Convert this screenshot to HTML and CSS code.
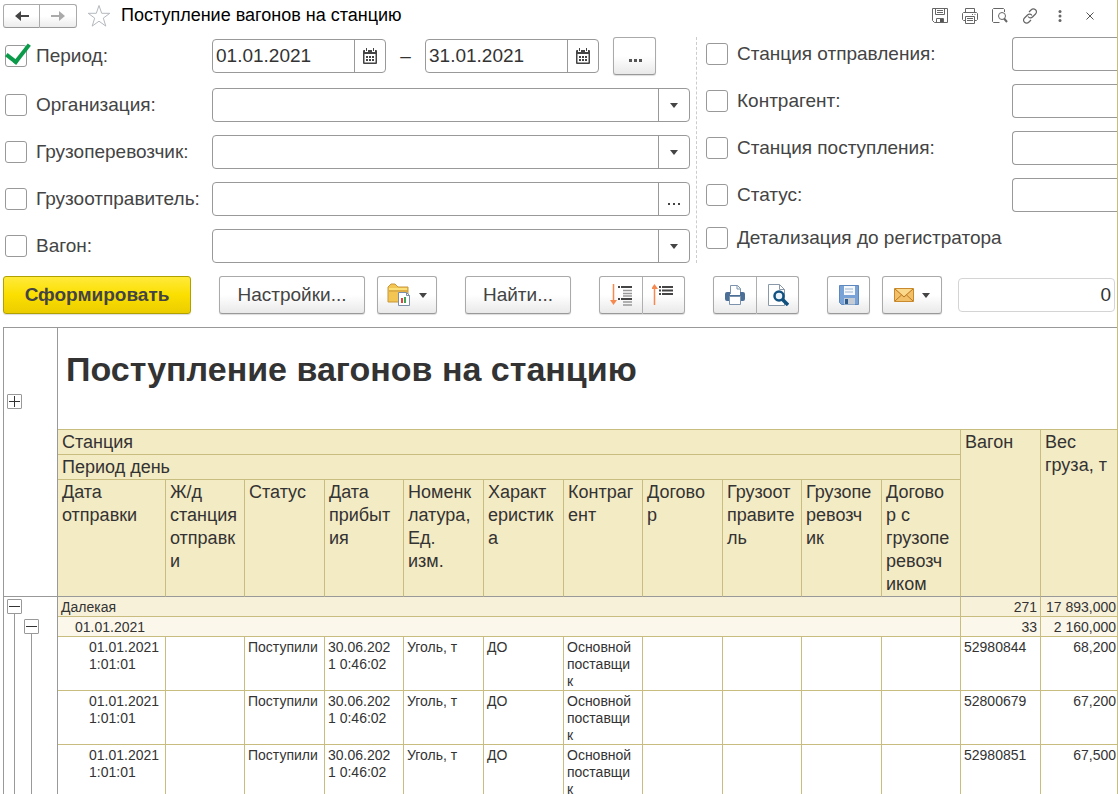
FILE: index.html
```html
<!DOCTYPE html>
<html lang="ru">
<head>
<meta charset="utf-8">
<title>Поступление вагонов на станцию</title>
<link rel="stylesheet" href="styles.css">
</head>
<body>
<svg class="defs" aria-hidden="true">
  <symbol id="calendar" viewBox="0 0 14 16">
    <path d="M1 2h12q1 0 1 1v12q0 1-1 1H1q-1 0-1-1V3q0-1 1-1z" fill="#444"/>
    <path d="M2 0h3v4H2zM9 0h3v4H9z" fill="#fff"/>
    <path d="M3 0h1v3H3zM10 0h1v3h-1z" fill="#444"/>
    <path d="M1.500 6h11v8.500h-11z" fill="#fff"/>
    <path d="M3 8h2v2H3zM6 8h2v2H6zM9 8h2v2H9zM3 11h2v2H3zM6 11h2v2H6zM9 11h2v2H9z" fill="#444"/>
  </symbol>
  <symbol id="caret" viewBox="0 0 8 5"><path d="M0 0h8L4 5z" fill="#444"/></symbol>
</svg>
<main class="app">
  <header class="titlebar">
    <div class="group nav">
      <button class="nav-btn" aria-label="Назад"><svg width="16" height="12" viewBox="0 0 16 12"><path d="M1 6l6-5v4h8v2H7v4z" fill="#444"/></svg></button>
      <button class="nav-btn" aria-label="Вперед"><svg width="16" height="12" viewBox="0 0 16 12"><path d="M15 6L9 1v4H1v2h8v4z" fill="#aaa"/></svg></button>
    </div>
    <button class="plain" aria-label="В избранное"><svg width="24" height="24" viewBox="0 0 24 24"><path d="M12 1.500l2.700 7.800h8.100l-6.500 4.800 2.500 8-6.800-4.900-6.800 4.900 2.500-8L1.200 9.300h8.100z" fill="none" stroke="#b4b8be"/></svg></button>
    <h1 class="title">Поступление вагонов на станцию</h1>
    <div class="tools">
      <button class="plain" aria-label="Сохранить"><svg width="16" height="16" viewBox="0 0 16 16" fill="none" stroke="#666"><path d="M.5.5h15v14H2.500l-2-2zM3.500.5v6h9v-6M5 2.500h6M5 4.500h6M4.500 14.500v-4h7v4"/><path d="M8 11h3v3H8z" fill="#555" stroke="none"/></svg></button>
      <button class="plain" aria-label="Печать"><svg width="16" height="16" viewBox="0 0 16 16" fill="none" stroke="#666"><path d="M3.500 4.500v-4h9v4M3.500 12.500h-2l-1-1v-6l1-1h13l1 1v6l-1 1h-2M3.500 8.500h9v7h-9zM5 10.500h6M5 12.500h6M10 6.500h1M12.500 6.500h1"/></svg></button>
      <button class="plain" aria-label="Просмотр"><svg width="16" height="16" viewBox="0 0 16 16" fill="none" stroke="#666"><path d="M12.500 4V1.500l-1-1H1.500l-1 1v12l1 1h6"/><circle cx="10" cy="8" r="3.500"/><path d="M12 10.500l3 3.500" stroke-width="2"/></svg></button>
      <button class="plain" aria-label="Ссылка"><svg width="16" height="16" viewBox="0 0 16 16" fill="none" stroke="#666" stroke-width="1.200"><path d="M7 4l2-2c3-3 7.500 1 4.500 4L10.500 9C9 10.500 7 10 6 8.500M9 12l-2 2c-3 3-7.500-1-4.500-4L5.500 7C7 5.500 9 6 10 7.500"/></svg></button>
      <button class="plain" aria-label="Еще"><svg width="16" height="12" viewBox="0 0 16 12" fill="#666"><circle cx="8" cy="1.500" r="1.500"/><circle cx="8" cy="6" r="1.500"/><circle cx="8" cy="10.500" r="1.500"/></svg></button>
      <button class="plain" aria-label="Закрыть"><svg width="16" height="8" viewBox="0 0 16 8"><path d="M4.500.5l7 7M11.500.5l-7 7" stroke="#555"/></svg></button>
    </div>
  </header>

  <section class="filters">
    <div class="left">
      <div class="row">
        <label class="check"><input type="checkbox" checked>Период:</label>
        <div class="period">
          <div class="field date"><input type="text" value="01.01.2021" aria-label="Начало периода"><button aria-label="Календарь"><svg width="14" height="16"><use href="#calendar"/></svg></button></div>
          <span class="dash">–</span>
          <div class="field date"><input type="text" value="31.01.2021" aria-label="Конец периода"><button aria-label="Календарь"><svg width="14" height="16"><use href="#calendar"/></svg></button></div>
          <button class="btn more" aria-label="Выбрать период"><svg width="14" height="3" viewBox="0 0 14 3"><path d="M1 0h3v3H1zM6 0h3v3H6zM11 0h3v3h-3z" fill="#555"/></svg></button>
        </div>
      </div>
      <div class="row">
        <label class="check"><input type="checkbox">Организация:</label>
        <div class="field"><input type="text" aria-label="Организация"><button aria-label="Выбрать"><svg width="8" height="5"><use href="#caret"/></svg></button></div>
      </div>
      <div class="row">
        <label class="check"><input type="checkbox">Грузоперевозчик:</label>
        <div class="field"><input type="text" aria-label="Грузоперевозчик"><button aria-label="Выбрать"><svg width="8" height="5"><use href="#caret"/></svg></button></div>
      </div>
      <div class="row">
        <label class="check"><input type="checkbox">Грузоотправитель:</label>
        <div class="field"><input type="text" aria-label="Грузоотправитель"><button class="dots" aria-label="Выбрать"><svg width="12" height="2" viewBox="0 0 12 2"><path d="M0 0h2v2H0zM5 0h2v2H5zM10 0h2v2h-2z" fill="#444"/></svg></button></div>
      </div>
      <div class="row">
        <label class="check"><input type="checkbox">Вагон:</label>
        <div class="field"><input type="text" aria-label="Вагон"><button aria-label="Выбрать"><svg width="8" height="5"><use href="#caret"/></svg></button></div>
      </div>
    </div>
    <div class="right">
      <div class="row"><label class="check"><input type="checkbox">Станция отправления:</label><div class="field cut"><input type="text" aria-label="Станция отправления"></div></div>
      <div class="row"><label class="check"><input type="checkbox">Контрагент:</label><div class="field cut"><input type="text" aria-label="Контрагент"></div></div>
      <div class="row"><label class="check"><input type="checkbox">Станция поступления:</label><div class="field cut"><input type="text" aria-label="Станция поступления"></div></div>
      <div class="row"><label class="check"><input type="checkbox">Статус:</label><div class="field cut"><input type="text" aria-label="Статус"></div></div>
      <div class="row"><label class="check"><input type="checkbox">Детализация до регистратора</label></div>
    </div>
  </section>

  <section class="toolbar">
    <button class="btn primary">Сформировать</button>
    <div class="cluster">
      <button class="btn settings">Настройки...</button>
      <button class="btn drop" aria-label="Варианты отчета">
        <svg width="24" height="24" viewBox="0 0 24 24"><path d="M1 19V4l3-3h4l3 3h10v15z" fill="#f3c653" stroke="#c9973a"/><path d="M2 8h19" stroke="#c9973a"/><path d="M2 5h18v2H2z" fill="#fbe07a"/><path d="M11.500 9.500h8l3 3v10h-11z" fill="#fff" stroke="#7c8fa8"/><path d="M19.500 9.500v3h3" fill="none" stroke="#7c8fa8"/><path d="M14 15h2v5h-2z" fill="#e2433a"/><path d="M17 14h2v6h-2z" fill="#3ba656"/></svg>
        <svg width="8" height="5"><use href="#caret"/></svg>
      </button>
    </div>
    <button class="btn find">Найти...</button>
    <div class="group">
      <button class="btn icon" aria-label="Развернуть"><svg width="24" height="24" viewBox="0 0 24 24"><path d="M4.500 1v18" stroke="#f5894f" stroke-width="1.500"/><path d="M1 17h7l-3.500 5z" fill="#f5894f"/><path d="M9 4h2M12 4h11M9 16h2M12 16h11" stroke="#444" stroke-width="2"/><path d="M14 7.500h9M14 10.500h9M14 13h9M14 19h9M14 22h9" stroke="#999" stroke-width="1.500"/></svg></button>
      <button class="btn icon" aria-label="Свернуть"><svg width="24" height="24" viewBox="0 0 24 24"><path d="M2.500 4v18" stroke="#f5894f" stroke-width="1.500"/><path d="M-1 6h7L2.500 1z" fill="#f5894f"/><path d="M7 4h2M10 4h11M7 7.500h2M10 7.500h11M7 11h2M10 11h11" stroke="#444" stroke-width="2"/></svg></button>
    </div>
    <div class="group">
      <button class="btn icon" aria-label="Печать"><svg width="22" height="22" viewBox="0 0 22 22"><path d="M6.500 10V1.500h7l3 3V10" fill="#fff" stroke="#7c93ad"/><path d="M13 1.500V5h3.500" fill="none" stroke="#7c93ad"/><path d="M3 8h3v3h10V8h3q2 0 2 2v5q0 2-2 2H3q-2 0-2-2v-5q0-2 2-2z" fill="#4c6f97"/><path d="M5.500 12.500h11v8h-11z" fill="#fff" stroke="#7c93ad"/></svg></button>
      <button class="btn icon" aria-label="Предварительный просмотр"><svg width="22" height="22" viewBox="0 0 22 22"><path d="M1.500.5h11l5 5v16h-16z" fill="#fff" stroke="#8a99aa"/><path d="M12.500.5v5h5" fill="none" stroke="#8a99aa"/><circle cx="12" cy="12" r="4.500" fill="#eaf3fa" stroke="#11517f" stroke-width="2.500"/><path d="M15 15l6 6" stroke="#11517f" stroke-width="3.500"/></svg></button>
    </div>
    <div class="cluster">
      <button class="btn icon" aria-label="Сохранить"><svg width="20" height="20" viewBox="0 0 20 20"><path d="M.5.5h19v19h-17l-2-2z" fill="#79a3d6" stroke="#5d88bd"/><path d="M5 1h11v9H5z" fill="#f5f8fc"/><path d="M6 4h8M6 7h8" stroke="#9db6d2"/><path d="M5 13h11v6.500H5z" fill="#c5ccd4"/><path d="M6 14h3v5H6z" fill="#2d5b8e"/></svg></button>
      <button class="btn drop" aria-label="Отправить">
        <svg width="20" height="14" viewBox="0 0 20 14"><path d="M.5.5h19v13H.5z" fill="#f3c06a" stroke="#c98a2e"/><path d="M2 1h16l-8 7z" fill="#fbd98c"/><path d="M1 1l9 8 9-8M1 13l6.500-6M19 13l-6.500-6" fill="none" stroke="#b97a22"/></svg>
        <svg width="8" height="5"><use href="#caret"/></svg>
      </button>
    </div>
    <input class="sum" type="text" value="0" aria-label="Сумма">
  </section>

  <section class="report">
    <table>
      <colgroup><col class="c-tree"><col class="c-first"><col class="c-a"><col class="c-b"><col class="c-a"><col class="c-b"><col class="c-b"><col class="c-a"><col class="c-b"><col class="c-a"><col class="c-b"><col class="c-a"><col class="c-b"><col></colgroup>
      <thead>
        <tr><td class="tree tree-head" rowspan="4"><button class="node" aria-label="Развернуть"><svg width="13" height="13"><path d="M1 6.500h11M6.500 1v11" stroke="#333"/></svg></button></td><td class="caption edge" colspan="13">Поступление вагонов на станцию</td></tr>
        <tr><th colspan="11">Станция</th><th class="tall" rowspan="3">Вагон</th><th class="tall edge" rowspan="3">Вес<br>груза, т</th></tr>
        <tr><th colspan="11">Период день</th></tr>
        <tr class="cols"><th>Дата<br>отправки</th><th>Ж/д<br>станция<br>отправк<br>и</th><th>Статус</th><th>Дата<br>прибыт<br>ия</th><th>Номенк<br>латура,<br>Ед.<br>изм.</th><th>Характ<br>еристик<br>а</th><th>Контраг<br>ент</th><th>Догово<br>р</th><th>Грузоот<br>правите<br>ль</th><th>Грузопе<br>ревозч<br>ик</th><th>Догово<br>р с<br>грузопе<br>ревозч<br>иком</th></tr>
      </thead>
      <tbody>
        <tr class="total"><td class="tree t1"><button class="node" aria-label="Свернуть"><svg width="13" height="13"><path d="M1 6.500h11" stroke="#333"/></svg></button></td><td colspan="11">Далекая</td><td class="num">271</td><td class="num edge">17 893,000</td></tr>
        <tr class="total day"><td class="tree t2"><button class="node" aria-label="Свернуть"><svg width="13" height="13"><path d="M1 6.500h11" stroke="#333"/></svg></button></td><td class="in1" colspan="11">01.01.2021</td><td class="num">33</td><td class="num edge">2 160,000</td></tr>
        <tr class="item"><td class="tree t3"></td><td class="in2">01.01.2021<br>1:01:01</td><td></td><td>Поступили</td><td>30.06.202<br>1 0:46:02</td><td>Уголь, т</td><td>ДО</td><td>Основной<br>поставщи<br>к</td><td></td><td></td><td></td><td></td><td>52980844</td><td class="num edge">68,200</td></tr>
        <tr class="item"><td class="tree t3"></td><td class="in2">01.01.2021<br>1:01:01</td><td></td><td>Поступили</td><td>30.06.202<br>1 0:46:02</td><td>Уголь, т</td><td>ДО</td><td>Основной<br>поставщи<br>к</td><td></td><td></td><td></td><td></td><td>52800679</td><td class="num edge">67,200</td></tr>
        <tr class="item"><td class="tree t3"></td><td class="in2">01.01.2021<br>1:01:01</td><td></td><td>Поступили</td><td>30.06.202<br>1 0:46:02</td><td>Уголь, т</td><td>ДО</td><td>Основной<br>поставщи<br>к</td><td></td><td></td><td></td><td></td><td>52980851</td><td class="num edge">67,500</td></tr>
      </tbody>
    </table>
  </section>
</main>
</body>
</html>
```

FILE: styles.css
```css
* { box-sizing: border-box; }
body {
  margin: 0;
  background: #fff;
  color: #444;
  font-family: "Liberation Sans", Arial, sans-serif;
  font-size: 19px;
}
button, input { font: inherit; color: inherit; }
button { padding: 0; cursor: pointer; }
svg { display: block; }
.defs { display: none; }

.app {
  height: 100vh;
  display: flex;
  flex-direction: column;
  overflow: hidden;
  border-right: 1px solid #c8bd7f;
}

/* Title bar */
.titlebar {
  display: flex;
  align-items: center;
  flex: none;
  height: 32px;
  padding: 0 19px 1px 3px;
  gap: 10px;
}
.group { display: flex; }
.nav-btn {
  width: 37px;
  height: 24px;
  display: grid;
  place-items: center;
  border: 1px solid #aaa;
  background: linear-gradient(#fff 50%, #ececec);
  border-bottom-color: #999;
}
.group > button:first-child { border-radius: 3px 0 0 3px; }
.group > button + button { border-left: 0; border-radius: 0 3px 3px 0; }
.plain { border: 0; background: none; display: grid; place-items: center; }
.title { margin: 0; font-size: 18px; font-weight: 400; color: #000; }
.tools { display: flex; align-items: center; gap: 14px; margin-left: auto; }

/* Filters */
.filters { display: flex; align-items: stretch; }
.left {
  flex: 0 0 696px;
  padding: 5px 6px 13px 5px;
  display: grid;
  gap: 13px;
}
.right {
  flex: 1;
  min-width: 0;
  overflow: hidden;
  padding-left: 9px;
  margin: 5px 0 13px;
  display: grid;
  align-content: start;
  gap: 13px;
  border-left: 1px dashed #ccc;
}
.row { display: grid; grid-template-columns: 207px 1fr; align-items: center; }
.right .row { grid-template-columns: 306px 1fr; }
.right .row:last-child { grid-template-columns: 1fr; padding-top: 2px; }
.check { display: flex; align-items: center; gap: 9px; white-space: nowrap; }
.check input {
  appearance: none;
  flex: none;
  width: 22px;
  height: 22px;
  margin: 0;
  border: 1px solid #999;
  border-radius: 3px;
  background: #fff;
  position: relative;
}
.check input:checked::after {
  content: "";
  position: absolute;
  left: 6px;
  top: -5px;
  width: 10px;
  height: 20px;
  border: solid #0b9a4a;
  border-width: 0 4px 4px 0;
  transform: translate(-1px, -2px) rotate(38deg);
}
.field {
  display: flex;
  height: 34px;
  border: 1px solid #999;
  border-radius: 4px;
  background: #fff;
  overflow: hidden;
}
.field input {
  flex: 1;
  min-width: 0;
  border: 0;
  padding: 0 3px;
  background: none;
  color: #333;
}
.field button {
  width: 31px;
  border: 0;
  border-left: 1px solid #999;
  background: none;
  display: grid;
  place-items: center;
}
.field .dots { padding-top: 10px; }
.cut { border-right: 0; border-radius: 4px 0 0 4px; }
.period { display: flex; align-items: center; height: 38px; }
.date { width: 174px; }
.dash { width: 39px; text-align: center; color: #333; }

/* Toolbar */
.btn {
  height: 38px;
  border: 1px solid #aaa;
  border-bottom-color: #999;
  border-radius: 3px;
  background: linear-gradient(#fff 50%, #e9e9e9);
  box-shadow: 0 1px 1px #ddd;
  display: flex;
  align-items: center;
  justify-content: center;
}
.more { width: 43px; margin-left: 14px; padding-top: 9px; }
.toolbar {
  display: flex;
  align-items: center;
  gap: 28px;
  padding: 0 2px 13px 3px;
}
.cluster { display: flex; gap: 12px; }
.primary {
  width: 188px;
  border-color: #b0a000;
  background: linear-gradient(#ffea3a, #fbdf00 50%, #ebcd00);
  font-weight: 700;
}
.settings { width: 146px; }
.find { width: 106px; }
.drop { width: 60px; gap: 8px; }
.icon { width: 43px; }
.group > .icon:first-child { width: 44px; }
.group > .icon + .icon { width: 42px; }
.sum {
  flex: 1;
  min-width: 0;
  height: 34px;
  margin-left: -12px;
  padding: 0 3px;
  border: 1px solid #d4d4d4;
  border-radius: 4px;
  text-align: right;
  color: #333;
}

/* Report */
.report {
  flex: 1;
  min-height: 0;
  margin-left: 3px;
  overflow: hidden;
  border: solid #999;
  border-width: 1px 0 0 1px;
}
table {
  width: 100%;
  table-layout: fixed;
  border-collapse: separate;
  border-spacing: 0;
  color: #333;
  font-size: 14px;
  line-height: 17px;
}
.c-tree { width: 54px; }
.c-first { width: 108px; }
.c-a { width: 79px; }
.c-b { width: 80px; }
th, td {
  padding: 2px 3px 0;
  border: solid #c8bd7f;
  border-width: 0 1px 1px 0;
  text-align: left;
  vertical-align: top;
  white-space: nowrap;
}
th {
  height: 25px;
  padding: 1px 4px 0;
  background: #f3ebc4;
  font-size: 18px;
  font-weight: 400;
  line-height: 23px;
}
.edge { border-right: 0; }
.cols th { height: 117px; border-bottom-color: #999; }
th.tall { border-bottom-color: #999; }
.caption {
  height: 102px;
  padding: 20px 8px 0;
  font-size: 34px;
  font-weight: 700;
  line-height: 42px;
}
.total td { height: 20px; background-color: #f7f1da; }
.day td { background-color: #fbf8eb; }
.item td { height: 54px; }
.num { text-align: right; }
.num.edge { padding-right: 1px; }
.in1 { padding-left: 17px; }
.in2 { padding-left: 31px; }

/* Group outline column */
td.tree {
  padding: 2px 3px 0;
  border-width: 0 1px 0 0;
  border-color: #999;
}
td.tree-head { padding-top: 66px; border-bottom-width: 1px; }
.node { width: 15px; height: 15px; border: 1px solid #999; border-radius: 1px; background: #fff; display: block; }
td.t1 { background: linear-gradient(#999, #999) 10px 16px / 1px 100% no-repeat #fff; }
td.t2 {
  padding-left: 20px;
  background:
    linear-gradient(#999, #999) 10px 0 / 1px 100% no-repeat,
    linear-gradient(#999, #999) 27px 16px / 1px 100% no-repeat #fff;
}
td.t3 {
  background:
    linear-gradient(#999, #999) 10px 0 / 1px 100% no-repeat,
    linear-gradient(#999, #999) 27px 0 / 1px 100% no-repeat #fff;
}
```
